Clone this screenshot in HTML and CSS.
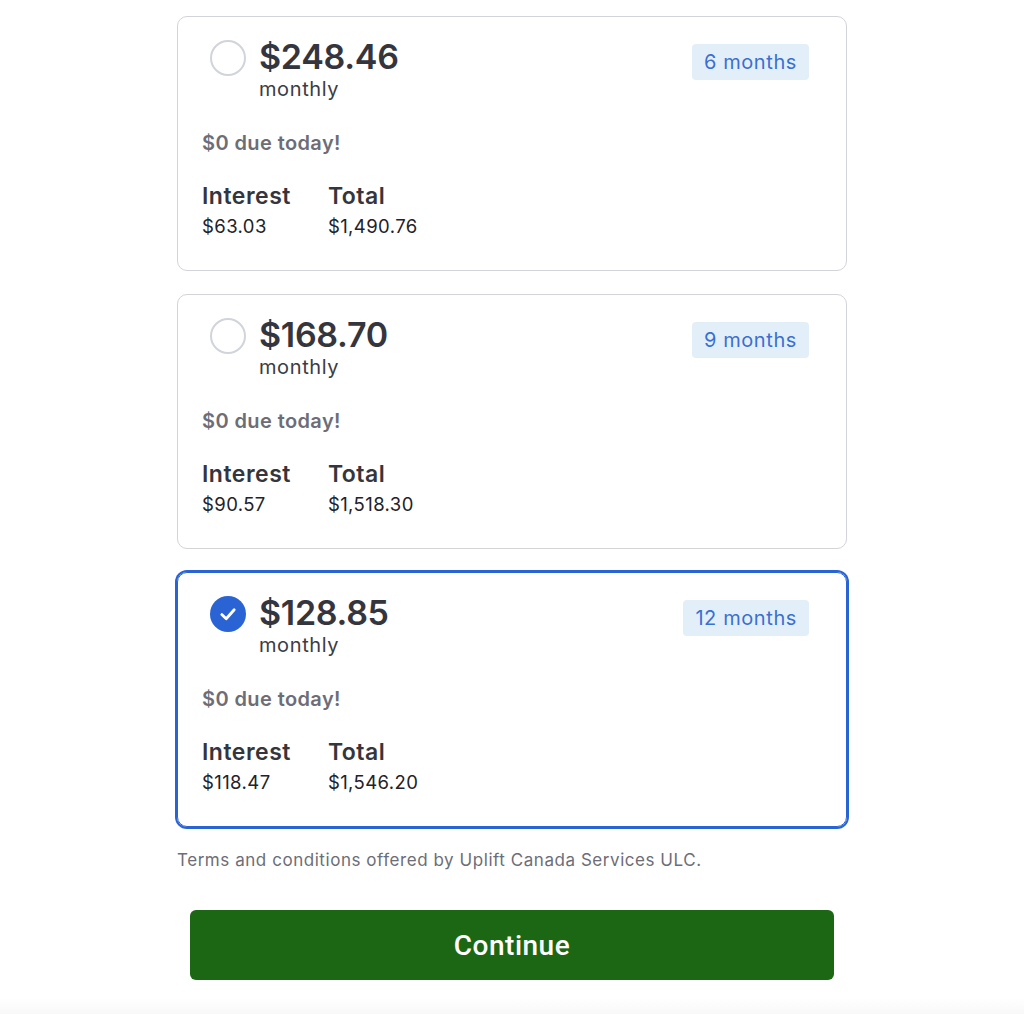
FILE: index.html
```html
<!DOCTYPE html>
<html lang="en">
	<head>
		<title>Choose a plan</title>
		<meta charset="utf-8">
		<meta name="viewport" content="width=device-width, initial-scale=1.0">
		<link rel="stylesheet" href="styles.css">
	</head>

	<body>
	<div class="plans">

		<div class="plan">
			<div class="plan-head">
				<span class="radio"></span>
				<div class="price">
					<div class="amount">$248.46</div>
					<div class="per">monthly</div>
				</div>
				<span class="term">6 months</span>
			</div>
			<div class="due">$0 due today!</div>
			<div class="figures">
				<div class="fig">
					<div class="fig-label">Interest</div>
					<div class="fig-value">$63.03</div>
				</div>
				<div class="fig">
					<div class="fig-label">Total</div>
					<div class="fig-value">$1,490.76</div>
				</div>
			</div>
		</div>

		<div class="plan">
			<div class="plan-head">
				<span class="radio"></span>
				<div class="price">
					<div class="amount">$168.70</div>
					<div class="per">monthly</div>
				</div>
				<span class="term">9 months</span>
			</div>
			<div class="due">$0 due today!</div>
			<div class="figures">
				<div class="fig">
					<div class="fig-label">Interest</div>
					<div class="fig-value">$90.57</div>
				</div>
				<div class="fig">
					<div class="fig-label">Total</div>
					<div class="fig-value">$1,518.30</div>
				</div>
			</div>
		</div>

		<div class="plan selected">
			<div class="plan-head">
				<span class="radio checked">
					<svg viewBox="0 0 36 36" width="36" height="36">
						<circle cx="18" cy="18" r="18" fill="#2a63d4"/>
						<path d="M11.8 18.6 L16.2 22.8 L24.2 13.8" fill="none" stroke="#fff" stroke-width="2.8" stroke-linecap="round" stroke-linejoin="round"/>
					</svg>
				</span>
				<div class="price">
					<div class="amount">$128.85</div>
					<div class="per">monthly</div>
				</div>
				<span class="term">12 months</span>
			</div>
			<div class="due">$0 due today!</div>
			<div class="figures">
				<div class="fig">
					<div class="fig-label">Interest</div>
					<div class="fig-value">$118.47</div>
				</div>
				<div class="fig">
					<div class="fig-label">Total</div>
					<div class="fig-value">$1,546.20</div>
				</div>
			</div>
		</div>

		<p class="terms">Terms and conditions offered by Uplift Canada Services ULC.</p>

		<button class="continue">Continue</button>
	</div>
	<div class="footer-fade"></div>
	</body>
</html>
```

FILE: styles.css
```css
body {
	margin: 0;
	background: #fff;
	font-family: Inter, "Noto Sans", sans-serif;
	color: #33333b;
	overflow: hidden;
}

.plans {
	width: 670px;
	margin: 0 auto;
	padding-top: 16px;
	display: flex;
	flex-direction: column;
	gap: 23px;
}

.plan {
	border: 1px solid #d3d3da;
	border-radius: 10px;
	height: 255px;
	padding: 20px 37px 0 24px;
	box-sizing: border-box;
}

.plan.selected {
	border: 1px solid #2a63d4;
	box-shadow: 0 0 0 2px #2a63d4;
}

.plan-head {
	display: flex;
	align-items: flex-start;
}

.radio {
	width: 32px;
	height: 32px;
	border: 2px solid #d2d4dc;
	border-radius: 50%;
	margin: 3px 13px 0 8px;
	flex: none;
}

.radio.checked {
	border: none;
	width: 36px;
	height: 36px;
}

.radio svg {
	display: block;
}

.price {
	flex: 1;
}

.amount {
	font-size: 34px;
	font-weight: 600;
	line-height: 40px;
	letter-spacing: -0.3px;
	color: #35353d;
}

.per {
	font-size: 20px;
	line-height: 24px;
	letter-spacing: 0.6px;
	color: #3c3c44;
}

.term {
	background: #e3eff8;
	color: #3a6fd3;
	font-size: 20px;
	line-height: 36px;
	letter-spacing: 0.6px;
	padding: 0 12px;
	border-radius: 4px;
	margin-top: 7px;
}

.due {
	font-size: 20px;
	font-weight: 600;
	letter-spacing: 0.4px;
	color: #6d6d77;
	margin-top: 30px;
	line-height: 24px;
}

.figures {
	display: flex;
	gap: 37px;
	margin-top: 27px;
}

.fig-label {
	font-size: 23px;
	font-weight: 600;
	line-height: 28px;
	letter-spacing: 0.5px;
	color: #35353d;
}

.fig-value {
	font-size: 18.5px;
	line-height: 30px;
	letter-spacing: 0.4px;
	color: #222228;
	margin-top: 1px;
}

.terms {
	margin: 0;
	font-size: 17px;
	line-height: 20px;
	letter-spacing: 0.55px;
	color: #6d6d77;
}

.continue {
	margin: 17px 13px 0;
	height: 70px;
	border: none;
	border-radius: 6px;
	background: #1c6714;
	color: #fff;
	font-family: Roboto, "Liberation Sans", sans-serif;
	font-size: 28px;
	font-weight: 500;
	letter-spacing: 0.5px;
	cursor: pointer;
}

.footer-fade {
	position: fixed;
	left: 0;
	right: 0;
	bottom: 0;
	height: 16px;
	background: linear-gradient(#fff, #f7f8f7);
}
```
